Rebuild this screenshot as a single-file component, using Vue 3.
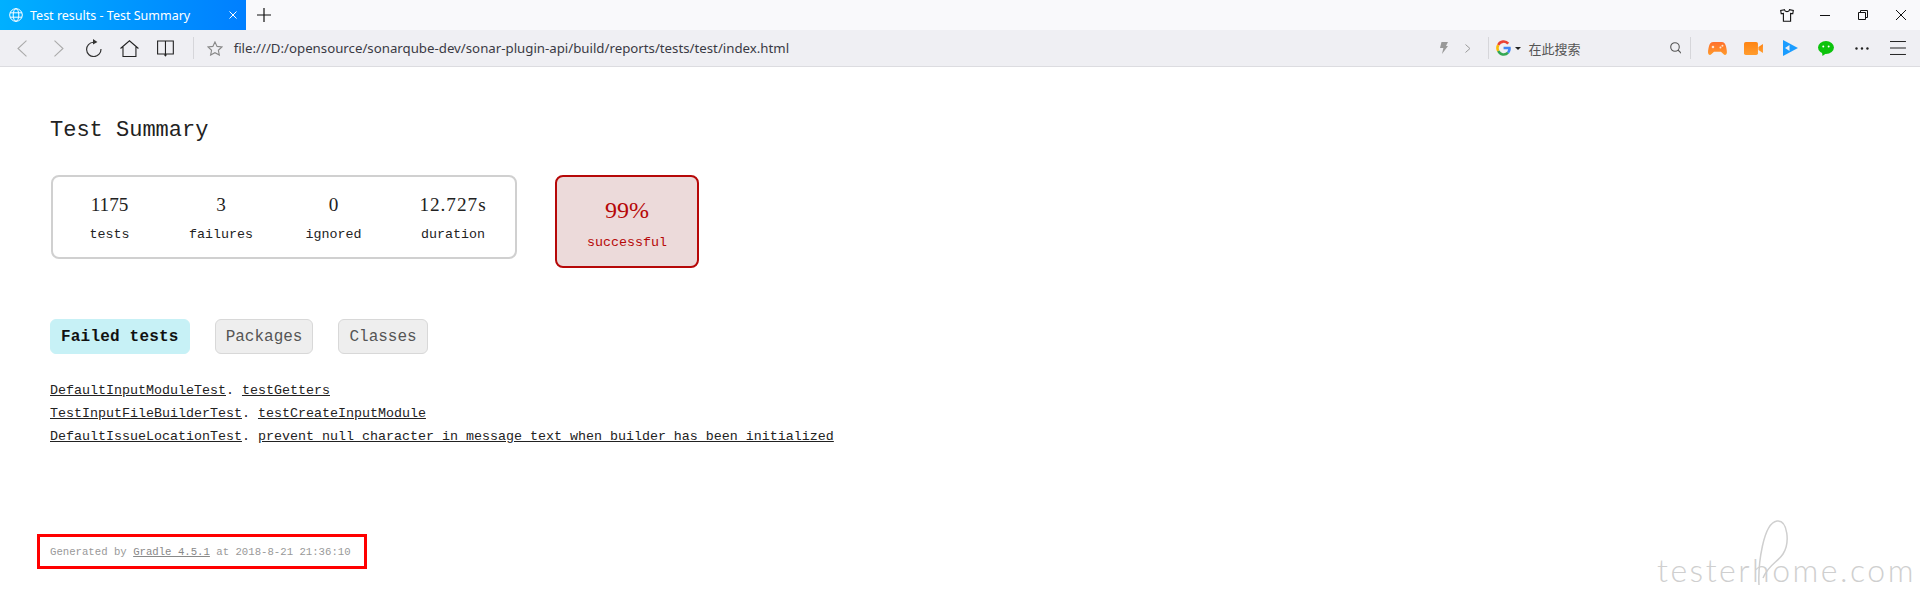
<script setup>
const stats = [
  { value: '1175', label: 'tests' },
  { value: '3', label: 'failures' },
  { value: '0', label: 'ignored' },
  { value: '12.727s', label: 'duration' }
]
const failed = [
  { cls: 'DefaultInputModuleTest', test: 'testGetters' },
  { cls: 'TestInputFileBuilderTest', test: 'testCreateInputModule' },
  { cls: 'DefaultIssueLocationTest', test: 'prevent null character in message text when builder has been initialized' }
]
</script>

<template>
  <div class="window">
    <header class="tabbar">
      <div class="tab">
        <svg class="globe" width="14" height="14" viewBox="0 0 14 14" fill="none" stroke="#fff" stroke-width="1">
          <circle cx="7" cy="7" r="6.3" />
          <ellipse cx="7" cy="7" rx="2.8" ry="6.3" />
          <path d="M1 4.8h12M1 9.2h12" />
        </svg>
        <span class="tab-title">Test results - Test Summary</span>
        <svg class="tab-close" width="8" height="8" viewBox="0 0 8 8" stroke="#fff" stroke-width="1"><path d="M.5.5l7 7M7.5.5l-7 7" /></svg>
      </div>
      <svg class="plus" width="14" height="14" viewBox="0 0 14 14" stroke="#111" stroke-width="1.2"><path d="M7 0v14M0 7h14" /></svg>
      <svg class="shirt" width="14" height="13" viewBox="0 0 14 13" fill="none" stroke="#111" stroke-width="1.1"><path d="M4.5.7L.7 1.5l.5 3.2 2.2-.3v7.9h7.2V4.4l2.2.3.5-3.2-3.8-.8C9.2 3.2 4.8 3.2 4.5.7z" /></svg>
      <svg class="min" width="10" height="10" viewBox="0 0 10 10" stroke="#111" stroke-width="1"><path d="M0 5.5h10" /></svg>
      <svg class="restore" width="10" height="10" viewBox="0 0 10 10" fill="none" stroke="#111" stroke-width="1"><path d="M.5 2.5h7v7h-7zM2.5 2.5v-2h7v7h-2" /></svg>
      <svg class="close" width="10" height="10" viewBox="0 0 10 10" stroke="#111" stroke-width="1"><path d="M0 0l10 10M10 0L0 10" /></svg>
    </header>

    <nav class="toolbar">
      <svg class="back" width="10" height="17" viewBox="0 0 10 17" fill="none" stroke="#aaa" stroke-width="1.1"><path d="M9.5.5L1 8.5l8.5 8" /></svg>
      <svg class="forward" width="10" height="17" viewBox="0 0 10 17" fill="none" stroke="#aaa" stroke-width="1.1"><path d="M.5.5L9 8.5l-8.500 8" /></svg>
      <svg class="reload" width="16" height="18" viewBox="0 0 16 18" fill="none" stroke="#333" stroke-width="1.2"><path d="M7.500 3.200A7.200 7.200 0 1 0 15 10" /><path d="M7 0l4.500 3L7 5.500z" fill="#333" stroke="none" /></svg>
      <svg class="home" width="19" height="17" viewBox="0 0 19 17" fill="none" stroke="#222" stroke-width="1.100"><path d="M.5 8.500L9.500.8l9 7.700M3 7v9.500h13V7" /></svg>
      <svg class="book" width="17" height="17" viewBox="0 0 17 17" fill="none" stroke="#222" stroke-width="1.100"><path d="M.6 1h15.800v13H.6zM8.500 .5v15" /><path d="M6.800 14.500h3.400L8.500 16.800z" fill="#222" stroke="none" /></svg>
      <span class="divider d1"></span>
      <svg class="star" width="16" height="15" viewBox="0 0 16 15" fill="none" stroke="#888" stroke-width="1.100"><path d="M8 .9l2.100 4.500 4.900.6-3.600 3.300 1 4.800L8 11.700l-4.400 2.400 1-4.800L1 6l4.900-.6z" /></svg>
      <span class="url">file:///D:/opensource/sonarqube-dev/sonar-plugin-api/build/reports/tests/test/index.html</span>
      <svg class="bolt" width="8" height="12" viewBox="0 0 8 12" fill="#999"><path d="M1.500 0H8L6 4h2l-6 8 1.400-6H0z" /></svg>
      <svg class="chev" width="6" height="9" viewBox="0 0 6 9" fill="none" stroke="#999" stroke-width="1"><path d="M.5.500l4.500 4-4.500 4" /></svg>
      <span class="divider d2"></span>
      <svg class="google" width="15" height="16" viewBox="0 0 15 16" fill="none" stroke-width="2.600">
        <path d="M12.300 3.600A6 6 0 0 0 2.300 5" stroke="#ea4335" />
        <path d="M2.300 5a6 6 0 0 0 0 6" stroke="#fbbc05" />
        <path d="M2.300 11a6 6 0 0 0 9.800 1.700" stroke="#34a853" />
        <path d="M12.100 12.700A6 6 0 0 0 13.500 8H7.600" stroke="#4285f4" />
      </svg>
      <span class="caret"></span>
      <span class="search-hint">在此搜索</span>
      <svg class="search" width="12" height="12" viewBox="0 0 12 12" fill="none" stroke="#555" stroke-width="1.100"><circle cx="5" cy="5" r="4.300" /><path d="M8 8l3.600 3.600" /></svg>
      <span class="divider d3"></span>
      <svg class="game" width="19" height="13" viewBox="0 0 19 13"><defs><linearGradient id="g1" x1="0" y1="0" x2="0" y2="1"><stop offset="0" stop-color="#ff6f2c" /><stop offset="1" stop-color="#ff9a2a" /></linearGradient></defs><path d="M5.500 0h8c2.800 0 4 2 4.600 4.500.6 2.500 1 5 .8 6.500-.3 2-2 2.500-3.200 1.300L13 9.800H6l-2.700 2.500C2.100 13.500.4 13 .1 11c-.2-1.500.2-4 .8-6.500C1.500 2 2.700 0 5.500 0z" fill="url(#g1)" /><circle cx="5" cy="5" r="1.300" fill="#ffe3cc" /><circle cx="12.500" cy="5.500" r="1" fill="#ffe3cc" /><circle cx="14.500" cy="3.800" r="1" fill="#ffe3cc" /></svg>
      <svg class="video" width="19" height="13" viewBox="0 0 19 13"><defs><linearGradient id="g2" x1="0" y1="0" x2="0" y2="1"><stop offset="0" stop-color="#ff8412" /><stop offset="1" stop-color="#ff9c2e" /></linearGradient></defs><rect width="14" height="13" rx="1.800" fill="url(#g2)" /><path d="M14.500 5L19 2v9l-4.500-3z" fill="url(#g2)" /></svg>
      <svg class="play" width="15" height="16" viewBox="0 0 15 16"><path d="M0 0l15 8-15 8z" fill="#1a9cff" /><path d="M2 8l4.500-3v6z" fill="#efeff3" /></svg>
      <svg class="wechat" width="16" height="15" viewBox="0 0 16 15"><ellipse cx="8" cy="6.500" rx="8" ry="6.500" fill="#0cc30c" /><path d="M4 11l.5 4 3.500-2.500z" fill="#0cc30c" /><circle cx="5.300" cy="5.500" r="1" fill="#fff" /><circle cx="10.700" cy="5.500" r="1" fill="#fff" /></svg>
      <svg class="dots" width="14" height="3" viewBox="0 0 14 3" fill="#222"><circle cx="1.500" cy="1.500" r="1.200" /><circle cx="7" cy="1.500" r="1.200" /><circle cx="12.500" cy="1.500" r="1.200" /></svg>
      <svg class="burger" width="16" height="14" viewBox="0 0 16 14" stroke="#222" stroke-width="1"><path d="M0 .5h16M0 7h16M0 13.500h16" /></svg>
    </nav>

    <main class="page">
      <h1 class="title">Test Summary</h1>

      <section class="summary">
        <div class="stats">
          <div v-for="s in stats" :key="s.label" class="stat">
            <div class="stat-value">{{ s.value }}</div>
            <div class="stat-label">{{ s.label }}</div>
          </div>
        </div>
        <div class="rate">
          <div class="rate-value">99%</div>
          <div class="rate-label">successful</div>
        </div>
      </section>

      <ul class="tabs">
        <li class="pill active">Failed tests</li>
        <li class="pill">Packages</li>
        <li class="pill">Classes</li>
      </ul>

      <ul class="failures">
        <li v-for="f in failed" :key="f.cls">
          <a href="#">{{ f.cls }}</a>. <a href="#">{{ f.test }}</a>
        </li>
      </ul>

      <footer class="generated">
        Generated by <a href="#">Gradle 4.5.1</a> at 2018-8-21 21:36:10
      </footer>
    </main>

    <div class="watermark">
      <svg class="loop" width="40" height="66" viewBox="0 0 40 66" fill="none" stroke="#cfcfcf" stroke-width="1.500">
        <path d="M2 65C1 45 6 3 20 1c11-1 13 22 6 33-5 8-14 10-20 24" />
      </svg>
      <span class="mark-text">testerhome.com</span>
    </div>
  </div>
</template>

<style scoped>
.window {
  position: relative;
  height: 611px;
  overflow: hidden;
  background: #fff;
  font-family: "Liberation Mono", monospace;
  color: #222;
}

.tabbar {
  display: flex;
  align-items: center;
  height: 30px;
  background: #f9f9fb;
}
.tab {
  display: flex;
  align-items: center;
  width: 246px;
  height: 30px;
  padding-left: 9px;
  box-sizing: border-box;
  background: linear-gradient(90deg, #00b0ff, #007fff);
  color: #fff;
}
.tab-title {
  margin-left: 7px;
  width: 199px;
  flex: none;
  font: 12.5px "Noto Sans", sans-serif;
  white-space: nowrap;
}
.plus { margin-left: 11px; }
.shirt { margin-left: auto; }
.min { margin-left: 26px; }
.restore { margin-left: 28px; }
.close { margin-left: 28px; margin-right: 14px; }

.toolbar {
  display: flex;
  align-items: center;
  height: 37px;
  box-sizing: border-box;
  background: #efeff3;
  border-bottom: 1px solid #dcdce0;
  padding-right: 14px;
}
.back { margin-left: 17px; }
.forward { margin-left: 27px; }
.reload { margin-left: 22px; }
.home { margin-left: 18px; }
.book { margin-left: 18px; }
.divider {
  width: 1px;
  height: 22px;
  background: #d6d6da;
  flex: none;
}
.d1 { margin-left: 19px; }
.star { margin-left: 13px; }
.url {
  margin-left: 11px;
  width: 1206px;
  flex: none;
  font: 13.25px "Noto Sans", sans-serif;
  color: #3a3a44;
  white-space: nowrap;
}
.chev { margin-left: 17px; }
.d2 { margin-left: 17px; }
.google { margin-left: 7px; }
.caret {
  margin-left: 4px;
  width: 0;
  height: 0;
  border: 3px solid transparent;
  border-top: 3px solid #222;
  border-bottom: 0;
}
.search-hint {
  margin-left: 8px;
  width: 52px;
  flex: none;
  font: 13px "Noto Sans CJK SC", sans-serif;
  color: #555;
}
.search { margin-left: 89px; }
.d3 { margin-left: 9px; }
.game { margin-left: 17px; }
.video { margin-left: 17px; }
.play { margin-left: 20px; }
.wechat { margin-left: 20px; }
.dots { margin-left: 21px; }
.burger { margin-left: 21px; }

.page {
  padding: 49px 0 0 50px;
}
.title {
  margin: 0 0 29px;
  font-size: 22px;
  line-height: 30px;
  font-weight: 400;
}

.summary {
  display: flex;
  align-items: flex-start;
  margin-bottom: 51px;
}
.stats {
  display: grid;
  grid-template-columns: 113px 110px 115px 124px;
  width: 466px;
  height: 84px;
  margin-left: 1px;
  box-sizing: border-box;
  padding-top: 16px;
  border: 2px solid #d0d0d0;
  border-radius: 8px;
}
.stat { text-align: center; }
.stat-value {
  font: 19.2px/24px "Liberation Serif", serif;
}
.stat:last-child .stat-value { letter-spacing: 1px; }
.stat-label {
  margin-top: 8px;
  font-size: 13.33px;
  line-height: 20px;
}
.rate {
  width: 144px;
  height: 93px;
  margin-left: 38px;
  box-sizing: border-box;
  padding-top: 18px;
  border: 2px solid #b60808;
  border-radius: 8px;
  background: #ecdada;
  color: #b60808;
  text-align: center;
}
.rate-value {
  font: 24px/30px "Liberation Serif", serif;
}
.rate-label {
  margin-top: 8px;
  font-size: 13.33px;
  line-height: 20px;
}

.tabs {
  display: flex;
  gap: 25px;
  margin: 0 0 25.5px;
  padding: 0;
  list-style: none;
}
.pill {
  height: 35px;
  box-sizing: border-box;
  padding: 0 10px;
  border: 1px solid #d8d8d8;
  border-radius: 6px;
  background: #eee;
  color: #555;
  font-size: 16px;
  line-height: 35px;
}
.pill.active {
  border-color: #c7f1f6;
  background: #c7f1f6;
  color: #111;
  font-weight: 700;
  letter-spacing: 0.2px;
}

.failures {
  margin: -1px 0 86.5px;
  padding: 0;
  list-style: none;
  font-size: 13.33px;
  line-height: 23px;
}
.failures a {
  color: #222;
  text-decoration: underline;
}

.generated {
  width: 330px;
  height: 35px;
  margin-left: -13px;
  box-sizing: border-box;
  padding-left: 10px;
  border: 3px solid #f00;
  color: #999;
  font-size: 10.67px;
  line-height: 31px;
  white-space: nowrap;
}
.generated a { color: #888; text-decoration: underline; }

.watermark {
  position: absolute;
  left: 1657px;
  top: 520px;
  width: 258px;
  height: 70px;
}
.loop {
  position: absolute;
  left: 100px;
  top: 0;
}
.mark-text {
  position: absolute;
  left: 0;
  bottom: 0;
  font: 300 32px/40px Lato, sans-serif;
  letter-spacing: 2.500px;
  color: #cfcfcf;
  white-space: nowrap;
}
</style>
